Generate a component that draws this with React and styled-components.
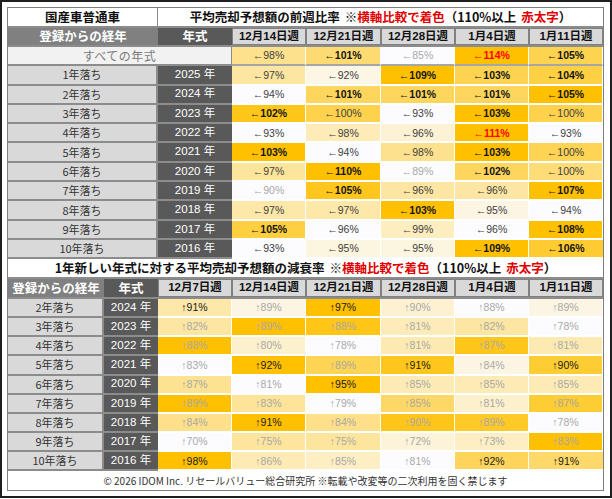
import styled, { createGlobalStyle, css } from "styled-components";

const GlobalStyle = createGlobalStyle`
  html, body {
    margin: 0;
    padding: 0;
    background: #ffffff;
    font-family: "Noto Sans CJK JP", "Noto Sans", sans-serif;
  }
`;

const COLUMNS = "96px 54px 74px 74px 75px 74px 74px 74px";

const topWeeks = ["12月14日週", "12月21日週", "12月28日週", "1月4日週", "1月11日週"];
const allYears = [98, 101, 85, 114, 105];
const topRows = [
  { label: "1年落ち", year: 2025, v: [97, 92, 109, 103, 104], min: 90 },
  { label: "2年落ち", year: 2024, v: [94, 101, 101, 101, 105] },
  { label: "3年落ち", year: 2023, v: [102, 100, 93, 103, 100] },
  { label: "4年落ち", year: 2022, v: [93, 98, 96, 111, 93] },
  { label: "5年落ち", year: 2021, v: [103, 94, 98, 103, 100] },
  { label: "6年落ち", year: 2020, v: [97, 109.6, 89, 102, 100] },
  { label: "7年落ち", year: 2019, v: [89.8, 105, 96, 96, 107] },
  { label: "8年落ち", year: 2018, v: [97, 97, 103, 95, 94] },
  { label: "9年落ち", year: 2017, v: [105, 96, 99, 96, 108] },
  { label: "10年落ち", year: 2016, v: [93, 95, 95, 109, 106] },
];

const bottomWeeks = ["12月7日週", ...topWeeks];
const bottomRows = [
  { label: "2年落ち", year: 2024, v: [91, 89, 97, 89.6, 88, 89] },
  { label: "3年落ち", year: 2023, v: [82, 89, 88, 81, 82, 78] },
  { label: "4年落ち", year: 2022, v: [88, 80, 78, 81, 87, 81] },
  { label: "5年落ち", year: 2021, v: [83, 92, 89, 91, 84, 90.2] },
  { label: "6年落ち", year: 2020, v: [87, 81, 95, 85, 85, 85] },
  { label: "7年落ち", year: 2019, v: [89, 83, 79, 85, 81, 87] },
  { label: "8年落ち", year: 2018, v: [84, 91, 84, 89.7, 89, 78] },
  { label: "9年落ち", year: 2017, v: [70, 75, 75, 72, 73, 83] },
  { label: "10年落ち", year: 2016, v: [98, 86, 85, 81, 92, 91] },
];

// row-wise colour scale, #fcfcff -> #ffc000
function scale(values, floor) {
  const min = floor ?? Math.min(...values);
  const max = Math.max(...values);
  return values.map((v) => (max === min ? 0 : (v - min) / (max - min)));
}

function mix(t) {
  const r = Math.round(252 + (255 - 252) * t);
  const g = Math.round(252 + (192 - 252) * t);
  const b = Math.round(255 + (0 - 255) * t);
  return `rgb(${r}, ${g}, ${b})`;
}

function topTone(v) {
  if (v >= 110) return "red";
  if (v >= 100.5) return "bold";
  if (v < 90) return "muted";
  return "plain";
}

function bottomTone(v) {
  return v >= 90 ? "dark" : "muted";
}

const Frame = styled.div`
  width: 612px;
  height: 498px;
  box-sizing: border-box;
  border: 2px solid #1f1f1f;
  padding: 5px;
  background: #fff;
`;

const Sheet = styled.div`
  width: 597px;
  box-sizing: border-box;
  border: 1px solid #7f7f7f;
`;

const Section = styled.div`
  display: grid;
  grid-template-columns: ${COLUMNS};
  grid-template-rows: ${(p) => p.$rows};
`;

const cell = css`
  box-sizing: border-box;
  display: flex;
  align-items: center;
  justify-content: center;
  white-space: nowrap;
  line-height: 1;
  grid-column: span ${(p) => p.$span || 1};
`;

const TitleCell = styled.div`
  ${cell};
  background: #fff;
  color: #111;
  font-size: 12.5px;
  font-weight: 700;
  border-bottom: 2px solid #8c8c8c;
  ${(p) => p.$divider && "border-right: 1px solid #8c8c8c;"}
`;

const NoteText = styled.span`
  margin-left: 5px;
`;

const Red = styled.span`
  color: #e00000;
  margin-left: ${(p) => (p.$gap ? "5px" : "0")};
`;

const HeadCell = styled.div`
  ${cell};
  font-size: 12.5px;
  font-weight: 700;
  color: #fff;
  border-bottom: 2px solid #8c8c8c;
  background: ${(p) => (p.$kind === "year" ? "#595959" : "#808080")};
`;

const WeekCell = styled.div`
  ${cell};
  font-family: "Liberation Sans", "Noto Sans CJK JP", sans-serif;
  font-size: 11.5px;
  font-weight: 700;
  color: #111;
  background: #d9d9d9;
  box-shadow: inset 0 0 0 1px #808080;
  border-bottom: 2px solid #8c8c8c;
`;

const AllCell = styled.div`
  ${cell};
  background: #f2f2f2;
  color: #7a7a7a;
  font-size: 12px;
  letter-spacing: 0.5px;
  border-bottom: 2px solid #8c8c8c;
  border-right: 1px solid #8c8c8c;
`;

const LabelCell = styled.div`
  ${cell};
  background: #d9d9d9;
  color: #333;
  font-size: 11px;
  border-bottom: 2px solid #8c8c8c;
  border-right: 2px solid #8c8c8c;
`;

const YearCell = styled.div`
  ${cell};
  background: #595959;
  color: #fff;
  font-family: "Liberation Sans", "Noto Sans CJK JP", sans-serif;
  font-size: 11.5px;
  border-bottom: 2px solid #8c8c8c;
`;

const toneColors = {
  red: "#ff0000",
  bold: "#141414",
  plain: "#404040",
  dark: "#1a1a1a",
  muted: "#a8a8a8",
};

const DataCell = styled.div`
  ${cell};
  font-family: "Liberation Sans", "Noto Sans CJK JP", sans-serif;
  font-size: 10.5px;
  color: ${(p) => toneColors[p.$tone]};
  font-weight: ${(p) => (p.$tone === "red" || p.$tone === "bold" ? 700 : 400)};
  border-right: 1px solid #fff;
  border-bottom: 2px solid ${(p) => (p.$rule ? "#a6a6a6" : "#fff")};
  &:last-child {
    border-right: none;
  }
`;

const Footer = styled.div`
  height: 19px;
  display: flex;
  align-items: center;
  justify-content: center;
  font-size: 10px;
  color: #333;
  white-space: nowrap;
`;

function Note() {
  return (
    <NoteText>
      ※<Red>横軸比較で着色</Red>（110%以上<Red $gap>赤太字</Red>）
    </NoteText>
  );
}

function DataRow({ values, floor, arrow, tone, rule }) {
  const ts = scale(values, floor);
  return values.map((v, i) => (
    <DataCell key={i} $tone={tone(v)} $rule={rule} style={{ background: mix(ts[i]) }}>
      {arrow}
      {Math.round(v)}%
    </DataCell>
  ));
}

function Row({ row, span, arrow, tone }) {
  return (
    <>
      <LabelCell $span={span}>{row.label}</LabelCell>
      <YearCell>{row.year} 年</YearCell>
      <DataRow values={row.v} floor={row.min} arrow={arrow} tone={tone} />
    </>
  );
}

export default function App() {
  return (
    <>
      <GlobalStyle />
      <Frame>
        <Sheet>
          <Section $rows="20px 19px repeat(11, 19.3px)">
            <TitleCell $span={2} $divider>
              国産車普通車
            </TitleCell>
            <TitleCell $span={6}>
              平均売却予想額の前週比率
              <Note />
            </TitleCell>

            <HeadCell $span={2}>登録からの経年</HeadCell>
            <HeadCell $kind="year">年式</HeadCell>
            {topWeeks.map((w) => (
              <WeekCell key={w}>{w}</WeekCell>
            ))}

            <AllCell $span={3}>すべての年式</AllCell>
            <DataRow values={allYears} arrow="←" tone={topTone} rule />

            {topRows.map((row) => (
              <Row key={row.label} row={row} span={2} arrow="←" tone={topTone} />
            ))}
          </Section>

          <Section $rows="19.5px 20px repeat(9, 19.2px)">
            <TitleCell $span={8}>
              1年新しい年式に対する平均売却予想額の減衰率
              <Note />
            </TitleCell>

            <HeadCell>登録からの経年</HeadCell>
            <HeadCell $kind="year">年式</HeadCell>
            {bottomWeeks.map((w) => (
              <WeekCell key={w}>{w}</WeekCell>
            ))}

            {bottomRows.map((row) => (
              <Row key={row.label} row={row} span={1} arrow="↑" tone={bottomTone} />
            ))}
          </Section>

          <Footer>
            © 2026 IDOM Inc. リセールバリュー総合研究所 ※転載や改変等の二次利用を固く禁じます
          </Footer>
        </Sheet>
      </Frame>
    </>
  );
}
